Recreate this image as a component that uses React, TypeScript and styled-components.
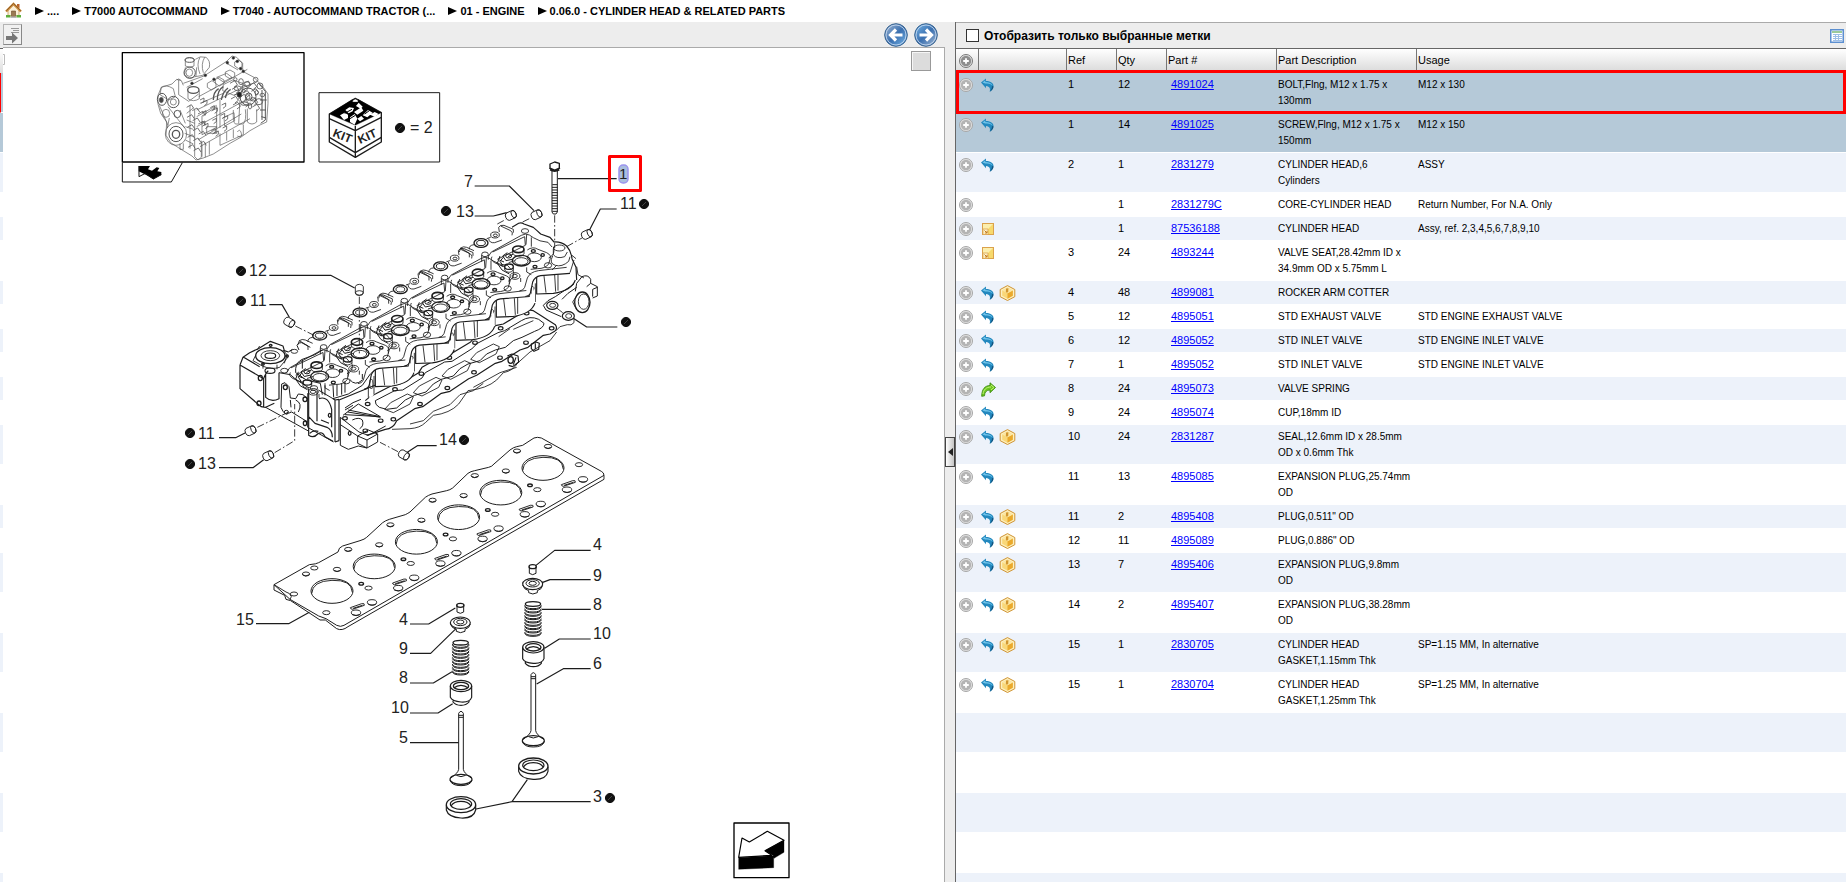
import React from "react";
import styled, { createGlobalStyle } from "styled-components";

const GlobalStyle = createGlobalStyle`
  *, *::before, *::after { box-sizing: border-box; }
  body { margin: 0; background: #fff; color: #000; font-family: "Liberation Sans", Arial, sans-serif; }
  button { font: inherit; padding: 0; margin: 0; cursor: pointer; }
  svg { display: block; }
`;

const Page = styled.div`
  height: 100vh;
  display: flex;
  flex-direction: column;
  overflow: hidden;
`;

const Breadcrumbs = styled.nav`
  flex: none;
  height: 22px;
  display: flex;
  align-items: flex-start;
  gap: 13px;
  padding: 2px 5px 0;
`;

const Crumb = styled.a`
  display: flex;
  align-items: center;
  gap: 3px;
  font-size: 11px;
  line-height: 18px;
  font-weight: bold;
  color: #000;
  text-decoration: none;
  white-space: nowrap;
`;

const HomeLink = styled.a`
  display: block;
`;

const Workspace = styled.main`
  flex: 1;
  min-height: 0;
  display: flex;
  background: #ededed;
`;

const DrawingPane = styled.section`
  flex: 945 1 0;
  min-width: 0;
  display: flex;
`;

const RowSliver = styled.div`
  flex: none;
  width: 3px;
  display: flex;
  flex-direction: column;
  padding-top: 26px;
  overflow: hidden;
  background: linear-gradient(#ededed 26px, #fff 26px);
`;

const SliverHead = styled.div`
  flex: none;
  height: 25px;
  border-top: 1px solid #666;
  background: linear-gradient(#fff, #ddd);
`;

const SliverRow = styled.div<{ $color: string; $tall: boolean; $marked: boolean }>`
  flex: none;
  height: ${(p) => (p.$tall ? 40 : 24)}px;
  background: ${(p) => p.$color};
  border-bottom: 1px solid #fff;
  border-left: ${(p) => (p.$marked ? "1px solid #f00" : "none")};
`;

const DrawingColumn = styled.div`
  flex: 1;
  min-width: 0;
  display: flex;
  flex-direction: column;
`;

const DrawingToolbar = styled.div`
  flex: none;
  height: 25px;
  display: flex;
  align-items: center;
  gap: 6px;
  padding-right: 7px;
`;

const PaneToggle = styled.button`
  width: 19px;
  height: 21px;
  margin-right: auto;
  border: 1px solid #b4b4b4;
  border-right-color: #888;
  border-bottom-color: #888;
  background: #f1f1f1;
`;

const NavButton = styled.button`
  width: 24px;
  height: 24px;
  border: 0;
  background: none;
`;

const Canvas = styled.div`
  position: relative;
  flex: 1;
  min-height: 0;
  overflow: hidden;
  background: #fff;
  border-top: 1px solid #aaa;
  border-right: 1px solid #aaa;
`;

const CanvasButton = styled.button`
  position: absolute;
  top: 3px;
  right: 13px;
  width: 20px;
  height: 20px;
  border: 1px solid #999;
  background: #dcdcdc;
  box-shadow: inset 1px 1px 0 #f6f6f6;
`;

const Splitter = styled.div`
  flex: none;
  width: 10px;
  display: flex;
  align-items: center;
`;

const SplitHandle = styled.button`
  width: 10px;
  height: 30px;
  padding-left: 2px;
  border: 1px solid #444;
  background: linear-gradient(90deg, #fff, #c4c4c4);
`;

const PartsPane = styled.section`
  position: relative;
  flex: 890 1 0;
  min-width: 0;
  display: flex;
  flex-direction: column;
  border-left: 1px solid #666;
`;

const PartsToolbar = styled.div`
  flex: none;
  height: 26px;
  display: flex;
  align-items: center;
  justify-content: space-between;
  padding: 0 2px 0 10px;
  border-top: 1px solid #aaa;
`;

const FilterLabel = styled.label`
  display: flex;
  align-items: center;
  gap: 5px;
  font-size: 12px;
  line-height: 16px;
  font-weight: bold;
`;

const FilterBox = styled.input`
  appearance: none;
  width: 13px;
  height: 13px;
  margin: 0;
  border: 1px solid #333;
  background: #fff;
`;

const ViewButton = styled.button`
  width: 14px;
  height: 14px;
  border: 0;
  background: none;
`;

const TableArea = styled.div`
  flex: 1;
  min-height: 0;
  display: flex;
  flex-direction: column;
  overflow: hidden;
  background: #fff;
  border-top: 1px solid #666;
`;

const PartsTable = styled.table`
  flex: none;
  width: 100%;
  table-layout: fixed;
  border-collapse: separate;
  border-spacing: 0;
`;

const HeadCell = styled.th`
  height: 24px;
  padding: 0 1px 2px;
  border-right: 1px solid #777;
  background: linear-gradient(#fff, #d8d8d8);
  font-size: 11px;
  line-height: 16px;
  font-weight: normal;
  text-align: left;
  &:last-child { border-right: 0; }
`;

const stripe = (index: number, selected: boolean) =>
  selected ? "#b5c9d8" : index % 2 === 0 ? "#edf2fa" : "#fff";

const PartRow = styled.tr<{ $color: string }>`
  background: ${(p) => p.$color};
`;

const Cell = styled.td<{ $kind?: "text" | "number" | "part" }>`
  padding: ${(p) => (p.$kind === "text" ? "4px 2px 3px" : "3px 2px 4px")};
  padding-left: ${(p) => (p.$kind === "part" ? 4 : 1)}px;
  border-bottom: 1px solid #fff;
  vertical-align: top;
  font-size: ${(p) => (p.$kind === "text" ? 10 : 11)}px;
  line-height: 16px;
  white-space: ${(p) => (p.$kind === "text" ? "pre-line" : "nowrap")};
`;

const PartLink = styled.a`
  color: #00f;
  text-decoration: underline;
`;

const IconRow = styled.div`
  display: flex;
  align-items: center;
  gap: 5px;
  height: 16px;
  padding: 2px 0 0 1px;
`;

const AddButton = styled.button`
  display: block;
  width: 14px;
  height: 14px;
  margin: 2px 0 0 2px;
  border: 0;
  background: none;
`;

const EmptyRows = styled.div`
  flex: 1;
  background: repeating-linear-gradient(#edf2fa 0 39px, #fff 39px 80px);
`;

const RowMarker = styled.div`
  position: absolute;
  top: 48px;
  left: 0;
  right: 0;
  height: 44px;
  border: 3px solid #f00;
  pointer-events: none;
`;

type Flag = "back" | "forward" | "note" | "box";
type Part = {
  ref?: string;
  qty: string;
  part: string;
  description: string;
  usage?: string;
  flags: Flag[];
  selected?: boolean;
};

const parts: Part[] = [
  { ref: "1", qty: "12", part: "4891024", description: "BOLT,Flng, M12 x 1.75 x\n130mm", usage: "M12 x 130", flags: ["back"], selected: true },
  { ref: "1", qty: "14", part: "4891025", description: "SCREW,Flng, M12 x 1.75 x\n150mm", usage: "M12 x 150", flags: ["back"], selected: true },
  { ref: "2", qty: "1", part: "2831279", description: "CYLINDER HEAD,6\nCylinders", usage: "ASSY", flags: ["back"] },
  { qty: "1", part: "2831279C", description: "CORE-CYLINDER HEAD", usage: "Return Number, For N.A. Only", flags: [] },
  { qty: "1", part: "87536188", description: "CYLINDER HEAD", usage: "Assy, ref. 2,3,4,5,6,7,8,9,10", flags: ["note"] },
  { ref: "3", qty: "24", part: "4893244", description: "VALVE SEAT,28.42mm ID x\n34.9mm OD x 5.75mm L", flags: ["note"] },
  { ref: "4", qty: "48", part: "4899081", description: "ROCKER ARM COTTER", flags: ["back", "box"] },
  { ref: "5", qty: "12", part: "4895051", description: "STD EXHAUST VALVE", usage: "STD ENGINE EXHAUST VALVE", flags: ["back"] },
  { ref: "6", qty: "12", part: "4895052", description: "STD INLET VALVE", usage: "STD ENGINE INLET VALVE", flags: ["back"] },
  { ref: "7", qty: "1", part: "4895052", description: "STD INLET VALVE", usage: "STD ENGINE INLET VALVE", flags: ["back"] },
  { ref: "8", qty: "24", part: "4895073", description: "VALVE SPRING", flags: ["forward"] },
  { ref: "9", qty: "24", part: "4895074", description: "CUP,18mm ID", flags: ["back"] },
  { ref: "10", qty: "24", part: "2831287", description: "SEAL,12.6mm ID x 28.5mm\nOD x 0.6mm Thk", flags: ["back", "box"] },
  { ref: "11", qty: "13", part: "4895085", description: "EXPANSION PLUG,25.74mm\nOD", flags: ["back"] },
  { ref: "11", qty: "2", part: "4895408", description: "PLUG,0.511\" OD", flags: ["back", "box"] },
  { ref: "12", qty: "11", part: "4895089", description: "PLUG,0.886\" OD", flags: ["back", "box"] },
  { ref: "13", qty: "7", part: "4895406", description: "EXPANSION PLUG,9.8mm\nOD", flags: ["back", "box"] },
  { ref: "14", qty: "2", part: "4895407", description: "EXPANSION PLUG,38.28mm\nOD", flags: ["back", "box"] },
  { ref: "15", qty: "1", part: "2830705", description: "CYLINDER HEAD\nGASKET,1.15mm Thk", usage: "SP=1.15 MM, In alternative", flags: ["back", "box"] },
  { ref: "15", qty: "1", part: "2830704", description: "CYLINDER HEAD\nGASKET,1.25mm Thk", usage: "SP=1.25 MM, In alternative", flags: ["back", "box"] },
];

const HomeIcon = () => (
  <svg width="17" height="17" viewBox="0 0 17 17">
    <path d="M12 2h2.500v4h-2.500z" fill="#b9622c" />
    <path d="M3 8l5.500-5.500L14 8v6H3z" fill="#fbf0d8" stroke="#b98a4a" strokeWidth=".7" />
    <path d="M1 9.500l7.500-7.500 7.500 7.500" fill="none" stroke="#c98a3c" strokeWidth="2.400" />
    <path d="M1.300 8.700l7.200-7.200 7.200 7.200" fill="none" stroke="#7a4a1c" strokeWidth=".7" />
    <path d="M6.500 9h4v5.500h-4z" fill="#9a7a52" stroke="#6b4a26" strokeWidth=".6" />
    <path d="M1 13h4.500v2.500H1zM11.500 13H16v2.500h-4.500z" fill="#5fae3c" />
    <path d="M5.500 14.500h6V16h-6z" fill="#b9b9b9" />
  </svg>
);

const CrumbArrow = () => (
  <svg width="9" height="8" viewBox="0 0 9 8">
    <path d="M0 0l9 4-9 4z" />
  </svg>
);

const PlusIcon = ({ dark }: { dark?: boolean }) => (
  <svg width="14" height="14" viewBox="0 0 14 14">
    <circle cx="7" cy="7" r="6.500" fill="#e4e4e4" stroke={dark ? "#777" : "#a6a6a6"} />
    <circle cx="7" cy="7" r="5.200" fill={dark ? "#8e8e8e" : "#b4b4b4"} />
    <path d="M7 4.200v5.600M4.200 7h5.600" stroke="#fff" strokeWidth="1.800" />
  </svg>
);

const BackIcon = () => (
  <svg width="13" height="14" viewBox="0 0 13 14">
    <path d="M0 4.500L5 .5V3c5 0 8 2.500 7.500 5.500-.3 2.500-1.500 4-3.800 5.200C9.500 11 9 8.500 5 8v2.300z" fill="#2388be" />
    <path d="M1.500 4.500L4.300 2.300V4c4 .1 6.500 1.500 7 3.500C9 5.500 7 5.800 4.300 5.600z" fill="#6fc3ea" />
    <path d="M8.700 13.700c2.300-1.200 3.500-2.700 3.800-5.200l-1.500-.5c0 2-.7 4-2.300 5.700z" fill="#13527d" />
  </svg>
);

const ForwardIcon = () => (
  <svg width="15" height="15" viewBox="0 0 15 15">
    <path d="M14.500 5.500L9 .8v2.700C4 3.700.8 7 .7 14.300l2.800-.5C3.600 10 5.500 8 9 8v2.700z" fill="#6cc81e" stroke="#3d8a12" strokeWidth=".9" />
    <path d="M10 3l3 2.500-3 2.300M2 12c.5-4 3-7 8-7" fill="none" stroke="#c4f07a" />
  </svg>
);

const NoteIcon = () => (
  <svg width="14" height="14" viewBox="0 0 14 14">
    <rect x="1.500" y="1.500" width="11" height="11" fill="#f7d96c" stroke="#dba24c" />
    <path d="M2 2h10L2 12z" fill="#fcefae" />
    <path d="M2 7h5v5.500H2z" fill="#fff6d0" stroke="#dba24c" strokeWidth=".8" />
    <path d="M3.500 8.500l2.500 2.500M6 8.800V11H3.800" fill="none" stroke="#c47a1c" />
  </svg>
);

const BoxIcon = () => (
  <svg width="17" height="16" viewBox="0 0 17 16">
    <path d="M8.500.6l7.300 3.900v7.200l-7.300 3.800-7.300-3.800V4.500z" fill="#fdf0c0" stroke="#cf9332" />
    <path d="M8.500 2.600l5.300 2.800v5.400l-5.300 2.900-5.300-2.900V5.400z" fill="#f9d778" />
    <path d="M8.500 8.200l5.300-2.800v5.400l-5.300 2.900z" fill="#eaa92c" />
    <path d="M3.200 5.400l5.300 2.800 5.300-2.800-5.300-2.800z" fill="#fce7a4" />
    <path d="M7 3.600l2.400-.4-.2 3.800-1.400.8-1-.8z" fill="#d19630" />
  </svg>
);

const flagIcons: Record<Flag, { icon: React.ReactNode; title: string }> = {
  back: { icon: <BackIcon />, title: "Replaces" },
  forward: { icon: <ForwardIcon />, title: "Replaced by" },
  note: { icon: <NoteIcon />, title: "Note" },
  box: { icon: <BoxIcon />, title: "Kit" },
};

const ArrowDisc = ({ flip }: { flip?: boolean }) => (
  <svg width="24" height="24" viewBox="0 0 24 24">
    <defs>
      <linearGradient id={flip ? "discR" : "discL"} x1={flip ? "1" : "0"} y1={flip ? "1" : "0"} x2={flip ? "0" : "1"} y2={flip ? "0" : "1"}>
        <stop offset="0" stopColor="#a9bdd6" />
        <stop offset=".5" stopColor="#3b70b0" />
        <stop offset="1" stopColor="#78b8ea" />
      </linearGradient>
    </defs>
    <circle cx="12" cy="12" r="11.300" fill={flip ? "url(#discR)" : "url(#discL)"} stroke="#35618f" />
    <circle cx="12" cy="12" r="10" fill="none" stroke="#d0e0f2" strokeWidth=".8" />
    <g transform={flip ? "translate(24 0) scale(-1 1)" : undefined}>
      <path d="M18.500 12H7.500M12 6.500L6.500 12l5.500 5.500" fill="none" stroke="#fff" strokeWidth="3.200" />
    </g>
  </svg>
);

const SheetIcon = () => (
  <svg width="14" height="14" viewBox="0 0 14 14">
    <rect x=".75" y=".75" width="12.500" height="12.500" fill="#fff" stroke="#5c8fd0" strokeWidth="1.500" />
    <path d="M2 3h10" stroke="#7ab87a" strokeWidth="1.500" />
    <path d="M3 5.500h9M3 7.500h9M3 9.500h9M3 11.500h9M5.500 5v7M8.500 5v7" stroke="#9dbfe8" />
  </svg>
);

/* ---- exploded view ---- */

const DrawingSvg = styled.svg`
  font-family: "Liberation Sans", Arial, sans-serif;
  font-size: 16px;
  fill: none;
  stroke: #1c1c1c;
  stroke-linejoin: round;
  text { fill: #222; stroke: none; }
`;

const labels: [string, number, number][] = [
  ["7", 464, 187], ["13", 456, 217], ["11", 620, 209], ["12", 249, 276], ["11", 250, 306],
  ["11", 198, 439], ["13", 198, 469], ["14", 439, 445], ["4", 593, 550], ["9", 593, 581],
  ["8", 593, 610], ["10", 593, 639], ["6", 593, 669], ["4", 399, 625], ["9", 399, 654],
  ["8", 399, 683], ["10", 391, 713], ["5", 399, 743], ["15", 236, 625], ["3", 593, 802],
  ["= 2", 410, 133],
];

const dots: [number, number][] = [
  [446, 211], [644, 204], [241, 271], [241, 301], [626, 322], [190, 433], [190, 464], [464, 440], [610, 798], [400, 128],
];

const plugs: [number, number, number][] = [
  [873, 196, -25], [950, 194, -25], [1101, 253, -25], [418, 420, 90], [208, 517, 30], [92, 842, -25], [145, 917, -25], [552, 915, 30],
];

const six = [0, 1, 2, 3, 4, 5];

const Bay = () => (
  <g>
    <path d="M806 318l8-12 90-50q12-7 24-1l12 8q18 12 44 14l12 14M816 320q-6 10 8 18l26 12M920 254l-2 30M934 262v28M818 306l96-46 2 26-84 42M1000 290q8 24-14 34" />
    <path d="M840 318l-8 22 14 20 22 12M850 322l-10 12 8 12M862 308l-14 10 10 14 18-4M880 312l-16 8M842 346l14 4M838 330l14 6" strokeWidth="3" />
    <ellipse cx="895" cy="298" rx="17" ry="10" strokeWidth="5" />
    <path d="M878 300v10q4 8 17 9t17-8v-12" />
    <ellipse cx="904" cy="332" rx="27" ry="16" strokeWidth="4" />
    <ellipse cx="904" cy="334" rx="20" ry="11" />
    <ellipse cx="943" cy="322" rx="21" ry="13" />
    <path d="M922 300q16-12 32-2l26 10q16 8 10 20l-4 14q-10 14-34 14l-20 2" />
    <ellipse cx="940" cy="303" rx="6" ry="4" strokeWidth="4" />
    <ellipse cx="968" cy="315" rx="5" ry="4" strokeWidth="4" />
    <ellipse cx="945" cy="350" rx="6" ry="4" strokeWidth="4" />
    <ellipse cx="984" cy="346" rx="11" ry="8" />
    <ellipse cx="866" cy="318" rx="9" ry="6" strokeWidth="3" />
    <ellipse cx="867" cy="350" rx="13" ry="8" strokeWidth="4" />
    <path d="M854 352v8q4 7 13 7t13-7v-8" />
    <ellipse cx="885" cy="378" rx="15" ry="10" />
    <ellipse cx="884" cy="378" rx="8" ry="5" />
    <path d="M868 382v20M902 384v12M920 352v14l14 8M884 332l-18 6" />
  </g>
);

const FrontWall = () => (
  <g>
    <path d="M1066 390V345l-16 25-88 7q-18 3-24 19l-6 30v42q10-6 18-16v-20l50-2q55-8 66-40z" fill="#fff" stroke="none" />
    <path d="M1050 370L962 377Q944 380 938 396L932 426Q930 437 916 440" strokeWidth="3.500" />
    <path d="M1040 352L955 362Q930 366 922 384L914 412Q910 422 898 423" />
    <path d="M950 382V432L1000 430Q1055 422 1066 390" strokeWidth="3.500" />
    <path d="M972 378l6 50M1004 375l3 50M1014 374v48" />
    <ellipse cx="938" cy="424" rx="5" ry="15" />
    <path d="M929 432v32M946 400v56" />
  </g>
);

const RearLugs = () => (
  <g>
    <ellipse cx="783" cy="279" rx="21" ry="13" strokeWidth="4" />
    <ellipse cx="783" cy="279" rx="13" ry="8" strokeWidth="3" />
    <ellipse cx="825" cy="255" rx="13" ry="9" />
    <ellipse cx="826" cy="256" rx="6" ry="4" />
    <path d="M838 246l-2-14q4-8 16-6l28 12v10M842 228l30 14q8 6 4 14M762 284q-16 2-14 14M718 306l4-12q8-6 18-2l22 10M722 294l26 16v12M812 262l-12 4" />
    <ellipse cx="795" cy="313" rx="10" ry="7" />
    <path d="M785 315v20M805 315v14M806 266q2 14 18 12l22-8" />
  </g>
);

const ManifoldFlange = () => (
  <g>
    <path d="M436 752L450 740 520 704 540 702 596 668 606 652 672 616 692 612 752 576 764 560 830 526 850 522 900 492 918 478 940 482 1006 524Q1014 536 1004 544L990 552 970 556 924 592 900 600 846 634 826 640 770 676 746 686 690 724 664 730 608 770 584 776 530 812Q520 836 496 838L440 856" strokeWidth="3.500" />
    <path d="M466 752L524 722 548 720 606 684 616 668 674 636 696 634 756 596 772 580 834 548 854 542 904 512Q930 496 956 508L972 520Q972 534 944 544L906 562 880 572 856 592 826 600 800 612 780 632 744 642 720 656 700 678 664 688 640 702 618 726 584 736 556 750 530 774 500 778 478 772Q464 764 466 752" strokeWidth="3" />
    {[0, 1, 2, 3].map((i) => (
      <g key={i} transform={`translate(${-86 * i} ${50 * i})`}>
        <path d="M752 628l18-20 50-26 18 8-10 22-50 26z" />
      </g>
    ))}
    <path d="M880 538l60-26M836 560l34-24" />
    <path d="M516 838L570 836Q600 834 616 818L640 796Q690 790 716 762L744 722Q800 716 830 690L850 668Q880 662 892 640L930 606 990 572 1010 546M570 822L610 812 640 784 690 764 720 734 760 722 790 700M760 712L840 668 890 652" />
    {([[920, 490], [842, 535], [765, 578], [688, 623], [604, 671], [525, 718], [443, 762], [995, 535], [918, 578], [840, 623], [762, 667], [682, 714], [600, 762], [520, 808], [482, 812], [436, 842], [375, 805]] as [number, number][]).map(([x, y]) => (
      <ellipse key={`${x}-${y}`} cx={x} cy={y} rx="7" ry="5" strokeWidth="3.500" />
    ))}
    <ellipse cx="872" cy="630" rx="8" ry="10" strokeWidth="4" />
    <path d="M862 618l14-6 18 6 2 18-18 14-12-4M888 622l-8 22M934 582l14-6 10 4-2 18-14 6-8-8zM946 580v18" strokeWidth="3.500" />
  </g>
);

const LeftEnd = () => (
  <g transform="translate(45 510)">
    <path d="M15 135L24 112 44 98 70 86 106 64 144 78 148 92 160 96M15 135V206L78 260 92 262 118 250M15 135L86 176V262M86 176Q92 158 100 152M26 112L74 140M92 164V232Q110 248 132 236V158" strokeWidth="3.500" />
    <ellipse cx="106" cy="107" rx="44" ry="24" strokeWidth="4" />
    <ellipse cx="106" cy="107" rx="28" ry="15" />
    <ellipse cx="106" cy="107" rx="16" ry="8" strokeWidth="3.500" />
    <path d="M62 106L54 122 82 138Q110 150 134 142L160 110M66 90l8-12M144 90l12 14-8 26M84 134v12M126 134v14" />
    <ellipse cx="107" cy="76" rx="4" ry="3" strokeWidth="4" />
    <ellipse cx="84" cy="132" rx="4" ry="3" strokeWidth="4" />
    <ellipse cx="156" cy="108" rx="4" ry="3" strokeWidth="4" />
    <ellipse cx="105" cy="152" rx="15" ry="8" strokeWidth="3.500" />
    <ellipse cx="148" cy="152" rx="11" ry="7" />
    <ellipse cx="178" cy="94" rx="10" ry="6" />
    <ellipse cx="237" cy="204" rx="11" ry="7" />
    <ellipse cx="76" cy="174" rx="6" ry="8" strokeWidth="4" />
    <ellipse cx="72" cy="250" rx="6" ry="7" strokeWidth="4" />
    <path d="M132 158L166 164 180 176 222 204M250 210L294 236 340 222 382 196 406 162 420 150M182 158V146Q184 126 202 118L240 104 262 90M182 158L214 180 256 190 262 224M202 118v28M196 166l10 10M192 90l-6-14q4-10 14-8l26 14M160 96l12-8M270 196v30M294 196l2 36M306 194v34M320 190v34M330 184v34M344 178Q360 200 382 180M382 178v-16" strokeWidth="3" />
    <path d="M140 192L150 188 162 200 166 234 182 236 190 222 204 224 218 236M140 192L138 262Q150 290 160 280L170 276M166 240L168 262M182 240Q204 250 190 276M170 276L218 306M218 236V322L296 366M92 262L222 334" strokeWidth="3" />
    <ellipse cx="151" cy="202" rx="6" ry="7" strokeWidth="4" />
    <ellipse cx="210" cy="238" rx="6" ry="7" strokeWidth="4" />
    <ellipse cx="210" cy="310" rx="5" ry="7" strokeWidth="4" />
    <ellipse cx="154" cy="276" rx="6" ry="5" strokeWidth="3" />
    <path d="M221 206V346Q236 356 248 342 262 332 270 350L294 364M221 290L240 310 276 322Q292 330 292 352M246 212V236M246 232V304M252 236Q280 226 290 268V322M224 340Q234 330 250 334M258 300l24 10M300 240V366M312 240V362M294 236l6 4 12-2M300 366l12-4M312 300V240L420 196" strokeWidth="3.500" />
    <ellipse cx="284" cy="286" rx="4" ry="6" strokeWidth="4" />
    <path d="M316 292V376L340 388 370 378 396 384 428 366V342L400 330 368 348 396 360 428 342M396 360V382M368 348V370L396 384M316 292L372 336 400 346 452 318M316 314L368 348M324 286L370 252 436 290 330 284M340 270l96 20M338 276l98 16M330 264l24-16 24-10M330 270l24-14M352 300Q372 290 382 300 388 318 374 326" strokeWidth="3" />
    <ellipse cx="344" cy="340" rx="4" ry="6" strokeWidth="4" />
  </g>
);

const CylinderHead = () => (
  <g transform="translate(220 150) scale(.33333)" strokeWidth="2.600">
    <ManifoldFlange />
    {six.map((i) => (
      <g key={i} transform={`translate(${-121 * i} ${69.500 * i})`}>
        <Bay />
        {i < 5 && <RearLugs />}
        {i < 5 && <FrontWall />}
      </g>
    ))}
    <path d="M876 232L896 220Q904 216 912 222L940 232Q954 244 962 252L990 262 1002 276Q1022 274 1040 288 1054 304 1056 326L1068 352 1070 390" strokeWidth="3.500" />
    <ellipse cx="915" cy="243" rx="11" ry="7" />
    <ellipse cx="1018" cy="294" rx="17" ry="9" />
    <path d="M1000 296v18q10 14 34 6l8-14M998 318q-12 22 8 28t40-12l4-14M1010 346l-14 14M1062 330l-12 38M1070 350l4 24 18 10M1056 316l12 10" />
    {/* water outlet */}
    <path d="M1070 400L1086 380Q1104 372 1112 388L1112 400 1132 410V438L1118 444M1112 400L1100 410M1118 418L1132 412M1118 418V440M1062 402L1006 440 984 452 970 466 978 480 1024 500M1026 448Q1040 430 1070 412M1070 400L1066 424" strokeWidth="3" />
    <ellipse cx="1087" cy="457" rx="23" ry="31" strokeWidth="4" />
    <ellipse cx="1091" cy="455" rx="16" ry="23" />
    <path d="M1074 432l-16 24 12 24" />
    <ellipse cx="997" cy="466" rx="17" ry="12" strokeWidth="3.500" />
    <ellipse cx="998" cy="466" rx="9" ry="6" />
    <ellipse cx="1045" cy="498" rx="18" ry="13" strokeWidth="3.500" />
    <ellipse cx="1046" cy="498" rx="9" ry="7" />
    <path d="M1010 474l18 14M1062 506v12q-8 10-20 6l-22 6-12 12" />
    <LeftEnd />
    {/* bolt */}
    <path d="M990 42l14-6 14 4v14l-14 6-14-6zM988 54q16 14 32 0M990 60q14 8 28 0" strokeWidth="4" />
    <path d="M996 62v124l4 6h8l4-6V62M997 104h15M996 112h17M996 120h17M996 128h17M996 136h17M996 144h17M996 152h17M996 160h17M996 168h17M996 176h17M997 184h15" strokeWidth="3" />
    {/* axes */}
    <path d="M1004 196v98M832 222l26-14M908 216l24-12M1040 290l46-26M418 440v170M226 528l64 32M112 832l102-50M164 908l60-36V762M534 905l-54-28" strokeDasharray="22 7 5 7" />
    {plugs.map(([x, y, a]) => (
      <g key={`${x}-${y}`} transform={`translate(${x} ${y}) rotate(${a})`}>
        <path d="M-10-12H8q8 2 8 12T8 12H-10Q-17 10-17 0t7-12z" fill="#fff" />
        <ellipse cx="9" cy="0" rx="7" ry="12" />
      </g>
    ))}
    {/* leader lines */}
    <path d="M1014 86h176M764 108h104l74 74M764 198h56q20-4 40-10M1190 177h-49l-32 62M148 376h184l72 38M148 464h38l22 38M1192 531h-92l-40-26M650 887h-58l-30 20M-3 863h50l28-14M-3 953h102l32-24" strokeWidth="3.500" />
  </g>
);

const Gasket = () => (
  <g strokeWidth="2.800">
    <path d="M1152 148L384 590Q366 604 350 596L316 570 300 570 212 512 198 508 194 496 162 480V464" strokeWidth="3" />
    <path d="M162 464L268 404Q290 402 296 398L354 366Q356 352 368 348L420 332Q434 328 440 322L488 278Q496 272 508 268L556 254Q564 250 570 246L616 202Q624 196 636 192L680 182Q690 180 698 174L744 130Q752 124 764 122L806 112Q816 110 822 102L870 60Q880 52 890 50L908 46 942 24Q952 20 964 24L1144 124Q1152 128 1152 136L372 586Q362 592 350 586L318 566 296 558 210 508Z" fill="#fff" strokeWidth="3" />
    <path d="M162 464L198 486Q210 488 214 500L210 508M1152 136V148" />
    {six.map((i) => (
      <g key={i} transform={`translate(${-126.600 * i} ${73.800 * i})`}>
        <ellipse cx="969" cy="114" rx="63" ry="37" strokeWidth="3" />
        <path d="M908 122q2-38 61-40t61 36" />
        <ellipse cx="891" cy="63" rx="11" ry="6" />
        <path d="M881 65q8 8 20 0M974 52q10 8 21 0" />
        <ellipse cx="984" cy="49" rx="11" ry="6" />
        <ellipse cx="1089" cy="148" rx="14" ry="8" />
        <path d="M1077 152q12 10 25 0M1029 184q12 8 25 0" />
        <ellipse cx="1041" cy="179" rx="14" ry="8" />
        <path d="M1024 164l34-12q10-2 8 5l-36 12q-6-1-6-5M1032 166l28-9" />
        {i < 5 && <ellipse cx="930" cy="166" rx="7" ry="4" strokeWidth="4" />}
        <ellipse cx="952" cy="179" rx="11" ry="6" />
      </g>
    ))}
    <ellipse cx="1077" cy="104" rx="11" ry="6" />
    <ellipse cx="222" cy="492" rx="11" ry="6" />
    <ellipse cx="283" cy="414" rx="11" ry="6" />
  </g>
);

const ValveTrain = () => (
  <g strokeWidth="3">
    <path d="M-10-164v20q10 8 20 0v-20" />
    <ellipse cx="0" cy="-164" rx="11" ry="6" strokeWidth="4" />
    <ellipse cx="0" cy="-112" rx="30" ry="17" strokeWidth="3.500" />
    <ellipse cx="0" cy="-114" rx="20" ry="11" />
    <ellipse cx="0" cy="-114" rx="11" ry="6" />
    <path d="M-30-109q4 14 18 17v6q12 8 26 0v-6q14-4 16-16" />
    <ellipse cx="1" cy="-52" rx="23" ry="7" strokeWidth="4" />
    {[0, 1, 2, 3, 4, 5, 6, 7, 8].map((i) => (
      <path key={i} d={`M-24 ${-48 + i * 10}q2 10 25 10t25-10M-24 ${-44 + i * 10}q4 9 25 9t25-9`} strokeWidth="3" />
    ))}
    <ellipse cx="2" cy="78" rx="32" ry="17" strokeWidth="3.500" />
    <ellipse cx="2" cy="78" rx="23" ry="11" strokeWidth="4" />
    <path d="M-30 78v34q6 12 32 14t32-14V78M-22 122v4q8 10 24 10t24-10v-4M-20 84q10-8 22-8t22 8" strokeWidth="3.500" />
    <path d="M-5 160v168q-2 12-24 26M9 160v168q2 12 24 26M-5 160q7-12 14 0M-5 166h14M-5 172h14" strokeWidth="3" />
    <ellipse cx="2" cy="358" rx="33" ry="15" strokeWidth="3.500" />
    <path d="M-31 360q4 17 33 17t33-17M-12 346q14 8 28 0" />
    <ellipse cx="2" cy="434" rx="44" ry="24" strokeWidth="4" />
    <ellipse cx="2" cy="432" rx="32" ry="16" strokeWidth="3.500" />
    <path d="M-42 436v14q6 22 44 24t44-24v-14M-28 438q8-14 30-14t30 14" strokeWidth="3.500" />
  </g>
);

const LowerParts = () => (
  <g transform="translate(220 430) scale(.33333)">
    <Gasket />
    <g transform="translate(721 690)"><ValveTrain /></g>
    <g transform="translate(938 574)"><ValveTrain /></g>
    <path d="M1112 361h-108l-56 45M1112 449H990l-24 9M1112 538H966M1112 627h-94l-44 28M1112 716h-82l-80 46M570 582h56l80-48M570 670h62l76-74M570 759h70l56-34M570 849h84l44-28M570 938h146M108 581h98l62-34M1112 1115H876l-108 22M876 1115l46-66" strokeWidth="3.500" />
  </g>
);

const EngineThumb = () => (
  <g transform="scale(.33333)" strokeWidth="2" stroke="#555">
    <rect x="367" y="158" width="545" height="328" stroke="#000" strokeWidth="4" />
    <path d="M367 488v58h147l33-58" stroke="#111" strokeWidth="3" />
    <path d="M416 498H450L444 508 456 512 470 502 478 504 472 514 484 516V524L460 538 440 526 416 514z" fill="#000" stroke="none" />
    <path d="M417 498V530L436 520 460 537 484 524" stroke="#111" strokeWidth="3" />
    <path d="M556 178q12-10 26 0v20q-12 8-26 0zM586 178q14-12 32-6 14 10 10 30l-20 24-22 4M556 202l-2 22q14 18 34 4l2-26M600 172q-12 20 0 50M614 172q-12 20-4 46" />
    <ellipse cx="569" cy="180" rx="14" ry="7" strokeWidth="3" />
    <ellipse cx="569" cy="218" rx="17" ry="17" strokeWidth="3" />
    <ellipse cx="568" cy="218" rx="10" ry="11" />
    <path d="M550 250L612 228 680 184 696 168 710 172 728 190V214L762 232 790 262 804 282V310L800 366 782 374 750 392 722 412 690 430 640 462 610 474 588 480 576 468 540 446 512 428 498 406 500 366 482 340 474 312 474 286 484 262 516 252 530 238 544 242 550 256" />
    <path d="M560 262l48-26M680 190l34 20M536 240v44l30 20 30-22M530 240q6-6 12 0M484 262q14-10 36 4l6 24-20 10-26-16zM596 290l70-38 76-44M600 310l70-30M670 254l28-14 30 10v24l-26 12-34-14zM650 232l30-12 16 12-26 14zM622 250l14-8 12 8v12l-14 8-12-8zM646 238l12-6 14 8v10l-14 8-12-8zM676 216l14-6 14 8v12l-14 6-14-8zM704 186l12-6 10 8v12l-10 6-12-8z" />
    <ellipse cx="486" cy="298" rx="14" ry="18" strokeWidth="3" />
    <ellipse cx="520" cy="306" rx="17" ry="17" strokeWidth="3" />
    <ellipse cx="520" cy="306" rx="9" ry="9" />
    <ellipse cx="484" cy="300" rx="6" ry="8" fill="#444" />
    <ellipse cx="528" cy="402" rx="32" ry="34" />
    <ellipse cx="528" cy="402" rx="21" ry="23" strokeWidth="3" />
    <ellipse cx="528" cy="403" rx="11" ry="12" strokeWidth="4" />
    <ellipse cx="498" cy="340" rx="11" ry="12" />
    <ellipse cx="532" cy="342" rx="10" ry="11" strokeWidth="3" />
    <path d="M478 316l26 60M504 320l50 64M508 354l-6 30M540 330l16 40" />
    <ellipse cx="580" cy="270" rx="17" ry="10" strokeWidth="4" />
    <path d="M564 272v24q16 12 34 0v-24M590 330l70-34 60-30 50-20M590 350l60-34M590 380l140-76M594 420l130-78M600 440l60-34 90-50M660 300v84M720 300l-4 70M650 320l-44 28v56l44-22zM700 330q-2 36 6 42h24q10-10 6-44M742 326v40q14 12 28 0v-38M672 352l30-14 2 24-30 16zM620 380h30v20h-30z" />
    <path d="M640 300q0-24 16-34M652 300q0-30 18-40M664 300q4-24 20-36M676 294q4-20 16-26" strokeWidth="4" />
    <path d="M584 330v140l10 10 10-8v-50M570 316v130M606 430v40M616 428v44M628 424v40M660 400v36l70-32v-30M680 396v26M700 388v26M712 396q8-12 12 4t-12 8M560 360l24 10M556 380l24 8M554 400l26 10M560 340l20-16M556 420l24 12M540 430v18h10v-18" />
    {[0, 1, 2, 3, 4, 5, 6, 7, 8, 9, 10, 11, 12, 13].map((i) => (
      <g key={i}>
        <ellipse cx={706 + ((i * 37) % 84)} cy={238 + ((i * 53) % 86)} rx={5 + (i % 4) * 2} ry={5 + (i % 3) * 2} strokeWidth="2.500" />
        <path d={`M${560 + ((i * 17) % 50)} ${322 + i * 10}l14 -8 8 12M${690 + ((i * 29) % 84)} ${250 + ((i * 41) % 76)}l14 -8 8 12 -10 8M${600 + ((i * 31) % 90)} ${300 + ((i * 23) % 100)}l12 -6v10l-8 6`} strokeWidth="2.500" />
      </g>
    ))}
    <ellipse cx="744" cy="290" rx="24" ry="26" strokeWidth="3" />
    <ellipse cx="718" cy="284" rx="7" ry="8" fill="#222" />
    <ellipse cx="746" cy="290" rx="10" ry="11" strokeWidth="3" />
    <path d="M776 250l20 24v86l-14 10M786 270v90M780 300h20M780 330h18M784 350l14 4" strokeWidth="3" />
    {([[682, 188], [712, 184], [700, 174], [616, 226], [722, 206], [730, 214], [576, 250], [642, 238]] as [number, number][]).map(([x, y]) => (
      <circle key={`${x}-${y}`} cx={x} cy={y} r="4" fill="#222" />
    ))}
  </g>
);

const KitBox = () => (
  <g>
    <g transform="scale(.33333)">
      <rect x="957" y="278" width="362" height="208" strokeWidth="3" />
      <path d="M988 342l78-47 78 43v88l-78 46-78-46z" fill="#fff" strokeWidth="4" />
      <path d="M988 342l70-44v8h16v-8l70 40-78 38z" fill="#000" />
      <path d="M988 356l78 36 78-40M988 412l78 46 78-46M1066 378v94" strokeWidth="4" />
      <g fill="#fff" stroke="none">
        <path d="M1020 346l14-8 10 6v10l-12 6zM1036 330l12-8 14 2-4 10-12 6zM1062 336l22-14 6 10-18 12zM1076 308l12 12-6 6-14-8zM1088 346l16-16 14 8-16 14zM1050 352l14-10 8 14-8 18-14-8zM1110 344l14-8 12 6-12 8zM1072 356l12-8 8 8-12 8z" />
      </g>
      <path d="M1034 340l22-12M1094 342l14-10M1050 356l16-10" stroke="#000" strokeWidth="3" />
    </g>
    <text fontSize="12" fontWeight="bold" transform="translate(332 136) rotate(22)">KIT</text>
    <text fontSize="12" fontWeight="bold" transform="translate(360 144) rotate(-24)">KIT</text>
  </g>
);

const ViewArrow = () => (
  <g transform="translate(700 780) scale(.33333)">
    <rect x="102" y="129" width="165" height="164" strokeWidth="4" stroke="#000" />
    <path d="M116 232l10-58 22 12 54-32 50 27-57 31 20 14z" fill="#fff" stroke="#000" strokeWidth="3.500" />
    <path d="M116 233l105-6v36l-105 5zM252 181v36l-30 18-2-8-25-15z" fill="#000" stroke="#000" />
  </g>
);

const ExplodedView = () => (
  <DrawingSvg width="941" height="834" viewBox="3 48 941 834" role="img" aria-label="Cylinder head and related parts">
    <EngineThumb />
    <KitBox />
    <CylinderHead />
    <LowerParts />
    <ViewArrow />
    {labels.map(([t, x, y]) => (
      <text key={`${x}-${y}`} x={x} y={y}>{t}</text>
    ))}
    {dots.map(([x, y]) => (
      <g key={`${x}-${y}`}>
        <circle cx={x} cy={y} r="4.600" fill="#111" stroke="#111" />
        <path d={`M${x - 2} ${y + 2}l4-4`} stroke="#444" />
      </g>
    ))}
    <rect x="619" y="165" width="9" height="18" rx="4" fill="#a9bede" stroke="#9c94ee" strokeWidth="1.500" />
    <text x="619" y="179" fontSize="15">1</text>
    <rect x="609.500" y="156.500" width="31" height="34" stroke="#f00" strokeWidth="3" />
    <path d="M3 54.500h1.500v10H3" stroke="#bbb" />
  </DrawingSvg>
);

const crumbs = ["....", "T7000 AUTOCOMMAND", "T7040 - AUTOCOMMAND TRACTOR (...", "01 - ENGINE", "0.06.0 - CYLINDER HEAD & RELATED PARTS"];

export default function App() {
  return (
    <Page>
      <GlobalStyle />
      <Breadcrumbs aria-label="Breadcrumb">
        <HomeLink href="#" aria-label="Home"><HomeIcon /></HomeLink>
        {crumbs.map((c) => (
          <Crumb href="#" key={c}><CrumbArrow />{c}</Crumb>
        ))}
      </Breadcrumbs>
      <Workspace>
        <DrawingPane>
          <RowSliver aria-hidden>
            <SliverHead />
            {parts.map((p, i) => (
              <SliverRow key={i} $color={stripe(i, !!p.selected)} $tall={p.description.includes("\n")} $marked={i === 0} />
            ))}
            <EmptyRows />
          </RowSliver>
          <DrawingColumn>
            <DrawingToolbar>
              <PaneToggle aria-label="Show contents">
                <svg width="17" height="19" viewBox="0 0 17 19">
                  <path d="M7 3.500h8M9 5.500h6M7 7.500h8" stroke="#999" />
                  <path d="M2 11h6V7.500l6 5.500-6 5.500V15H2z" fill="#777" />
                </svg>
              </PaneToggle>
              <NavButton aria-label="Previous"><ArrowDisc /></NavButton>
              <NavButton aria-label="Next"><ArrowDisc flip /></NavButton>
            </DrawingToolbar>
            <Canvas>
              <ExplodedView />
              <CanvasButton aria-label="Fit drawing" />
            </Canvas>
          </DrawingColumn>
        </DrawingPane>
        <Splitter>
          <SplitHandle aria-label="Collapse panel">
            <svg width="5" height="8" viewBox="0 0 5 8"><path d="M5 0v8L0 4z" fill="#222" /></svg>
          </SplitHandle>
        </Splitter>
        <PartsPane>
          <PartsToolbar>
            <FilterLabel>
              <FilterBox type="checkbox" />
              Отобразить только выбранные метки
            </FilterLabel>
            <ViewButton aria-label="Table view"><SheetIcon /></ViewButton>
          </PartsToolbar>
          <TableArea>
            <PartsTable>
              <colgroup>
                <col width="23" />
                <col width="88" />
                <col width="50" />
                <col width="50" />
                <col width="110" />
                <col width="140" />
                <col />
              </colgroup>
              <thead>
                <tr>
                  <HeadCell><AddButton aria-label="Add all"><PlusIcon dark /></AddButton></HeadCell>
                  <HeadCell />
                  <HeadCell>Ref</HeadCell>
                  <HeadCell>Qty</HeadCell>
                  <HeadCell>Part #</HeadCell>
                  <HeadCell>Part Description</HeadCell>
                  <HeadCell>Usage</HeadCell>
                </tr>
              </thead>
              <tbody>
                {parts.map((p, i) => (
                  <PartRow key={i} $color={stripe(i, !!p.selected)}>
                    <Cell><AddButton aria-label={`Add ${p.part}`}><PlusIcon /></AddButton></Cell>
                    <Cell>
                      {p.flags.length > 0 && (
                        <IconRow>
                          {p.flags.map((f) => (
                            <span key={f} title={flagIcons[f].title}>{flagIcons[f].icon}</span>
                          ))}
                        </IconRow>
                      )}
                    </Cell>
                    <Cell $kind="number">{p.ref}</Cell>
                    <Cell $kind="number">{p.qty}</Cell>
                    <Cell $kind="part"><PartLink href="#">{p.part}</PartLink></Cell>
                    <Cell $kind="text">{p.description}</Cell>
                    <Cell $kind="text">{p.usage}</Cell>
                  </PartRow>
                ))}
              </tbody>
            </PartsTable>
            <EmptyRows />
          </TableArea>
          <RowMarker />
        </PartsPane>
      </Workspace>
    </Page>
  );
}
